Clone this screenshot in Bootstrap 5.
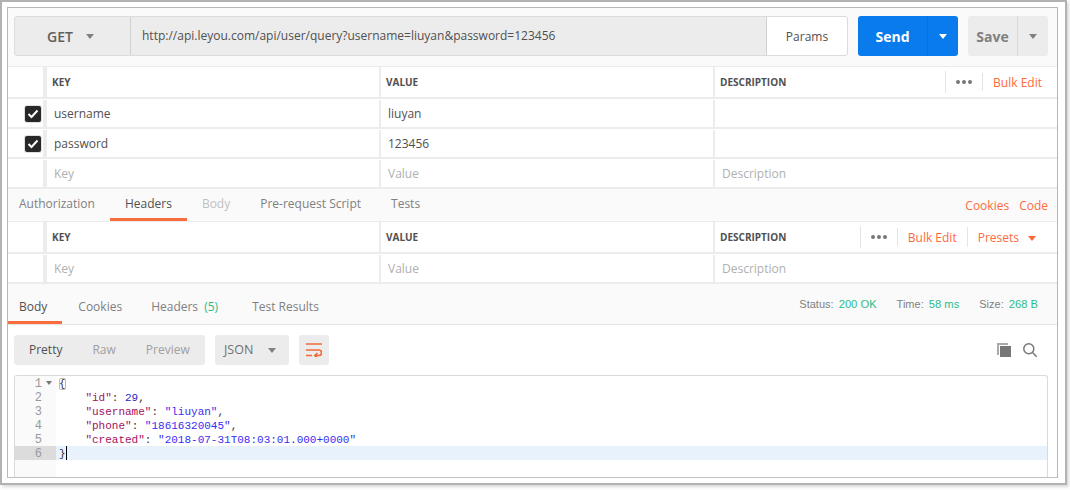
<!DOCTYPE html>
<html lang="en">
<head>
<meta charset="utf-8">
<title>Postman</title>
<link rel="stylesheet" href="https://cdn.jsdelivr.net/npm/bootstrap@5.3.0/dist/css/bootstrap.min.css">
<style>
html,body{margin:0;height:490px;overflow:hidden;background:#fff}
body{font-family:"Open Sans",sans-serif;font-size:12px;color:#505050}
.shot{width:1067px;height:485px;border:2px solid #b2b2b2;box-shadow:2px 2px 3px #d8d8d8;padding:5px 0 0 5px;background:#fff}
.frame{width:1051px;height:471px;border:1px solid #b7b7b7;border-bottom-color:#c0c0c0;background:#fafafa;overflow:hidden}
.urlrow{height:58px;padding:8px 9px 0 6px;gap:10px}
.urlgroup{width:834px;height:40px;border:1px solid #dcdcdc;border-radius:3px;background:#ececec;overflow:hidden}
.method{width:116px;border-right:1px solid #d0d0d0;font-size:14px;font-weight:600;color:#606060;padding:1px 0 0 32px;gap:13px}
.urltext{flex:1;font-size:12px;padding-left:11px;color:#505050}
.params{width:81px;background:#fff;border-left:1px solid #d0d0d0;justify-content:center;color:#505050;padding-top:2px}
.caret-d{width:0;height:0;border-left:4px solid transparent;border-right:4px solid transparent;border-top:5px solid #808080;display:inline-block}
.sendgroup{width:100px;height:40px;border-radius:3px;background:#097bed;color:#fff;font-size:14px;font-weight:700;overflow:hidden}
.sendgroup .lbl{width:69px;justify-content:center;padding-top:1px}
.sendgroup .arr{flex:1;border-left:1px solid #0a6fd6;justify-content:center}
.sendgroup .caret-d{border-top-color:#fff}
.savegroup{width:80px;height:40px;border-radius:3px;background:#ececec;color:#808080;font-size:14px;font-weight:700;overflow:hidden}
.savegroup .lbl{width:49px;justify-content:center;padding-top:1px}
.savegroup .arr{flex:1;border-left:1px solid #d8d8d8;justify-content:center}
.kv{background:#fff;border-top:1px solid #ececec}
.kvrow{height:30px;border-bottom:2px solid #ececec;display:flex;padding-top:1px}
.kvrow.head{height:32px;padding-top:0;font-size:10px;font-weight:700;color:#505050}
.c0{width:39px;border-right:4px solid #ececec;display:flex;align-items:center;justify-content:flex-end;padding-right:2px}
.c1{width:334px;border-right:2px solid #ececec;display:flex;align-items:center;padding-left:7px}
.c2{width:334px;border-right:2px solid #ececec;display:flex;align-items:center;padding-left:7px}
.c3{flex:1;display:flex;align-items:center;padding-left:7px;min-width:0}
.head .c1,.head .c2,.head .c3{padding-left:5px}
.ph{color:#b0b0b0}
.chk{width:16px;height:16px;border-radius:2px;background:#282828;display:flex;align-items:center;justify-content:center;box-shadow:0 0 0 1px #e0e0e0}
.tools{height:22px;margin-left:auto;color:#ff6a3a;font-size:12px;font-weight:400}
.dots{width:37px;height:22px;border-left:1px solid #e4e4e4;display:flex;gap:2px;align-items:center;padding-left:10px}
.dots i{width:4px;height:4px;border-radius:50%;background:#777;display:block}
.bulk{border-left:1px solid #e4e4e4;height:18px;padding:2px 15px 0 10px;display:flex;align-items:center}
.bulk.mid{padding-right:10px}
.presets{border-left:1px solid #e4e4e4;height:20px;padding:2px 21px 0 10px;gap:9px;display:flex;align-items:center}
.presets .caret-d{border-top-color:#ff6a3a}
.tabs1{height:32px;padding:0 9px 0 11px;align-items:stretch}
.tabitem{display:flex;align-items:center;color:#808080;border-bottom:3px solid transparent}
.tabitem.on{color:#505050;border-bottom-color:#f96c3b}
.tabs1 .tabitem{padding:0 15px}
.tabs1 .tabitem:first-child{padding-left:0;padding-right:15px}
.dim{color:#c0c0c0!important}
.orange{color:#ff6a3a;gap:10px;padding-top:2px}
.tabs2{height:41px;border-bottom:1px solid #e6e6e6;align-items:stretch}
.tabs2 .tabitem{padding:9px 16px 0}
.tabs2 .tabitem:first-child{padding:9px 15px 0 11px}
.tabs2 .tabitem.hdr{padding:9px 18px 0 13px}
.gr{color:#2cbc86;margin-left:3px}
.stat{font-family:"Liberation Sans",sans-serif;font-size:11px;color:#808080;gap:20px;padding:1px 19px 0 0}
.stat b{font-weight:400;color:#2cbc86;margin-left:2px;font-size:11.2px}
.bodypane{background:#fff;height:154px;padding:10px 9px 0 6px}
.seg{height:30px;border-radius:3px;background:#ececec;color:#a0a0a0}
.seg1{width:191px;padding-left:15px;gap:30px}
.seg2{width:74px;padding-left:9px;gap:15px;color:#707070;font-size:12.5px}
.seg3{width:30px;justify-content:center}
.rtools{gap:12px;padding-right:11px}
.ed{height:103px;margin-top:10px;border:1px solid #dadada;border-radius:3px 3px 0 0;border-bottom:0;font-family:"Liberation Mono",monospace;font-size:11px;line-height:14px;color:#333;overflow:hidden;display:flex;background:#fff}
.gut{width:41px;background:#fafafa;color:#999;text-align:right;flex:none;font-size:12px}
.gut div{height:14px;padding:1px 14px 0 0;position:relative}
.gut .fold{position:absolute;right:4px;top:5px;width:0;height:0;border-left:3px solid transparent;border-right:3px solid transparent;border-top:4px solid #777}
.gut .cur{background:#dcdcdc}
.code{flex:1;white-space:pre}
.code div{height:14px;padding:1px 0 0 3px}
.code .act{background:#e8f2fc}
.k{color:#a31060}.n{color:#2a2ac0}.s{color:#3a2cf0}
.cursor{border-left:1px solid #000;display:inline-block;height:14px;vertical-align:top;margin-top:-1px}
.br{outline:1px solid #bbb;outline-offset:-1px;border-radius:2px}
</style>
</head>
<body>
<div class="shot">
<div class="frame">
  <div class="urlrow d-flex">
    <div class="urlgroup d-flex">
      <div class="method d-flex align-items-center">GET <span class="caret-d"></span></div>
      <div class="urltext d-flex align-items-center">http://api.leyou.com/api/user/query?username=liuyan&amp;password=123456</div>
      <div class="params d-flex align-items-center">Params</div>
    </div>
    <div class="sendgroup d-flex"><div class="lbl d-flex align-items-center">Send</div><div class="arr d-flex align-items-center"><span class="caret-d"></span></div></div>
    <div class="savegroup d-flex"><div class="lbl d-flex align-items-center">Save</div><div class="arr d-flex align-items-center"><span class="caret-d"></span></div></div>
  </div>
  <div class="kv">
    <div class="kvrow head"><div class="c0"></div><div class="c1">KEY</div><div class="c2">VALUE</div><div class="c3">DESCRIPTION<div class="tools d-flex align-items-center"><div class="dots"><i></i><i></i><i></i></div><div class="bulk">Bulk Edit</div></div></div></div>
    <div class="kvrow"><div class="c0"><span class="chk"><svg width="12" height="10" viewBox="0 0 12 10"><path d="M1.5 5l3 3 6-6.5" fill="none" stroke="#fff" stroke-width="2"/></svg></span></div><div class="c1">username</div><div class="c2">liuyan</div><div class="c3"></div></div>
    <div class="kvrow"><div class="c0"><span class="chk"><svg width="12" height="10" viewBox="0 0 12 10"><path d="M1.5 5l3 3 6-6.5" fill="none" stroke="#fff" stroke-width="2"/></svg></span></div><div class="c1">password</div><div class="c2">123456</div><div class="c3"></div></div>
    <div class="kvrow ph"><div class="c0"></div><div class="c1">Key</div><div class="c2">Value</div><div class="c3">Description</div></div>
  </div>
  <div class="tabs1 d-flex">
    <div class="tabitem">Authorization</div>
    <div class="tabitem on">Headers</div>
    <div class="tabitem dim">Body</div>
    <div class="tabitem">Pre-request Script</div>
    <div class="tabitem">Tests</div>
    <div class="ms-auto d-flex align-items-center orange"><span>Cookies</span><span>Code</span></div>
  </div>
  <div class="kv">
    <div class="kvrow head"><div class="c0"></div><div class="c1">KEY</div><div class="c2">VALUE</div><div class="c3">DESCRIPTION<div class="tools d-flex align-items-center"><div class="dots"><i></i><i></i><i></i></div><div class="bulk mid">Bulk Edit</div><div class="presets">Presets <span class="caret-d"></span></div></div></div></div>
    <div class="kvrow ph"><div class="c0"></div><div class="c1">Key</div><div class="c2">Value</div><div class="c3">Description</div></div>
  </div>
  <div class="tabs2 d-flex">
    <div class="tabitem on">Body</div>
    <div class="tabitem">Cookies</div>
    <div class="tabitem hdr">Headers&nbsp;<span class="gr">(5)</span></div>
    <div class="tabitem">Test Results</div>
    <div class="stat ms-auto d-flex align-items-center"><span>Status: <b>200 OK</b></span><span>Time: <b>58 ms</b></span><span>Size: <b>268 B</b></span></div>
  </div>
  <div class="bodypane">
    <div class="d-flex" style="gap:10px">
      <div class="seg seg1 d-flex align-items-center"><span style="color:#505050">Pretty</span><span>Raw</span><span>Preview</span></div>
      <div class="seg seg2 d-flex align-items-center">JSON <span class="caret-d"></span></div>
      <div class="seg seg3 d-flex align-items-center"><svg width="16" height="14" viewBox="0 0 16 14" fill="none" stroke="#f4683a" stroke-width="1.7"><path d="M0 1h16M0 7h13c3.300 0 3.300 5.500 0 5.500H9M11.500 10L8.800 12.500l2.700 2.500M0 12.500h6"/></svg></div>
      <div class="ms-auto d-flex align-items-center rtools">
        <svg width="14" height="14" viewBox="0 0 14 14"><path d="M0 0h11v2H2v10H0z" fill="#aaa"/><path d="M3 3h11v11H3z" fill="#777"/></svg>
        <svg width="14" height="14" viewBox="0 0 14 14" fill="none" stroke="#777" stroke-width="1.5"><circle cx="5.800" cy="5.800" r="5"/><path d="M9.500 9.500l4.300 4.300"/></svg>
      </div>
    </div>
    <div class="ed">
      <div class="gut"><div>1<span class="fold"></span></div><div>2</div><div>3</div><div>4</div><div>5</div><div class="cur">6</div></div>
      <div class="code"><div><span class="br">{</span></div><div>    <span class="k">"id"</span>: <span class="n">29</span>,</div><div>    <span class="k">"username"</span>: <span class="s">"liuyan"</span>,</div><div>    <span class="k">"phone"</span>: <span class="s">"18616320045"</span>,</div><div>    <span class="k">"created"</span>: <span class="s">"2018-07-31T08:03:01.000+0000"</span></div><div class="act">}<span class="cursor"></span></div></div>
    </div>
  </div>
</div>
</div>
<script src="https://cdn.jsdelivr.net/npm/bootstrap@5.3.0/dist/js/bootstrap.bundle.min.js"></script>
</body>
</html>
